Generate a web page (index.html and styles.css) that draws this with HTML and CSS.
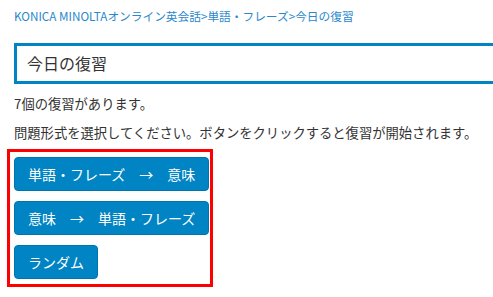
FILE: index.html
```html
<!DOCTYPE html>
<html lang="ja">
<head>
    <meta charset="UTF-8">
    <meta name="viewport" content="width=device-width, initial-scale=1.0">
    <title>今日の復習</title>
    <link rel="stylesheet" href="styles.css">
</head>
<body>

<div class="page">
    <div class="breadcrumb">
        <a href="#">KONICA MINOLTAオンライン英会話</a>&gt;<a href="#">単語・フレーズ</a>&gt;<span>今日の復習</span>
    </div>
    <h1 class="title">今日の復習</h1>
    <p class="count">7個の復習があります。</p>
    <p class="guide">問題形式を選択してください。ボタンをクリックすると復習が開始されます。</p>
    <div class="choices">
        <button class="mode">単語・フレーズ　→　意味</button>
        <button class="mode">意味　→　単語・フレーズ</button>
        <button class="mode">ランダム</button>
    </div>
</div>

</body>
</html>
```

FILE: styles.css
```css
:root {
    --blue: #0084c3;
    --blue-dark: #0074ad;
    --link: #2a88cc;
    --text: #333;
    --mark: #ff0000;
}
body {
    margin: 0;
    padding: 0;
    background: #fff;
    color: var(--text);
    font-family: "Noto Sans CJK JP", "Noto Sans", sans-serif;
}
.page {
    padding: 8px 0 0 14px;
}
.breadcrumb {
    font-size: 11.7px;
    line-height: 16px;
    color: var(--link);
}
.breadcrumb a {
    color: var(--link);
    text-decoration: none;
}
/* the box runs off the right edge in the original, so no right border */
.title {
    margin: 19px 0 0 0;
    padding: 0 10px;
    height: 35px;
    line-height: 35px;
    border: 3px solid var(--blue);
    border-right: none;
    font-size: 16px;
    font-weight: normal;
    color: var(--text);
}
.count,
.guide {
    margin: 10px 0 0 0;
    font-size: 13.3px;
    line-height: 19px;
}
.choices {
    display: inline-flex;
    flex-direction: column;
    align-items: flex-start;
    gap: 10px;
    margin: 7px 0 0 -7px;
    padding: 5px 2px 5px 4px;
    border: 3px solid var(--mark);
    width: 194px;
}
button.mode {
    height: 34px;
    padding: 0 13px;
    font-family: inherit;
    font-size: 14px;
    color: #fff;
    background: var(--blue);
    border: 1px solid var(--blue-dark);
    border-radius: 4px;
    cursor: pointer;
    white-space: nowrap;
}
```
